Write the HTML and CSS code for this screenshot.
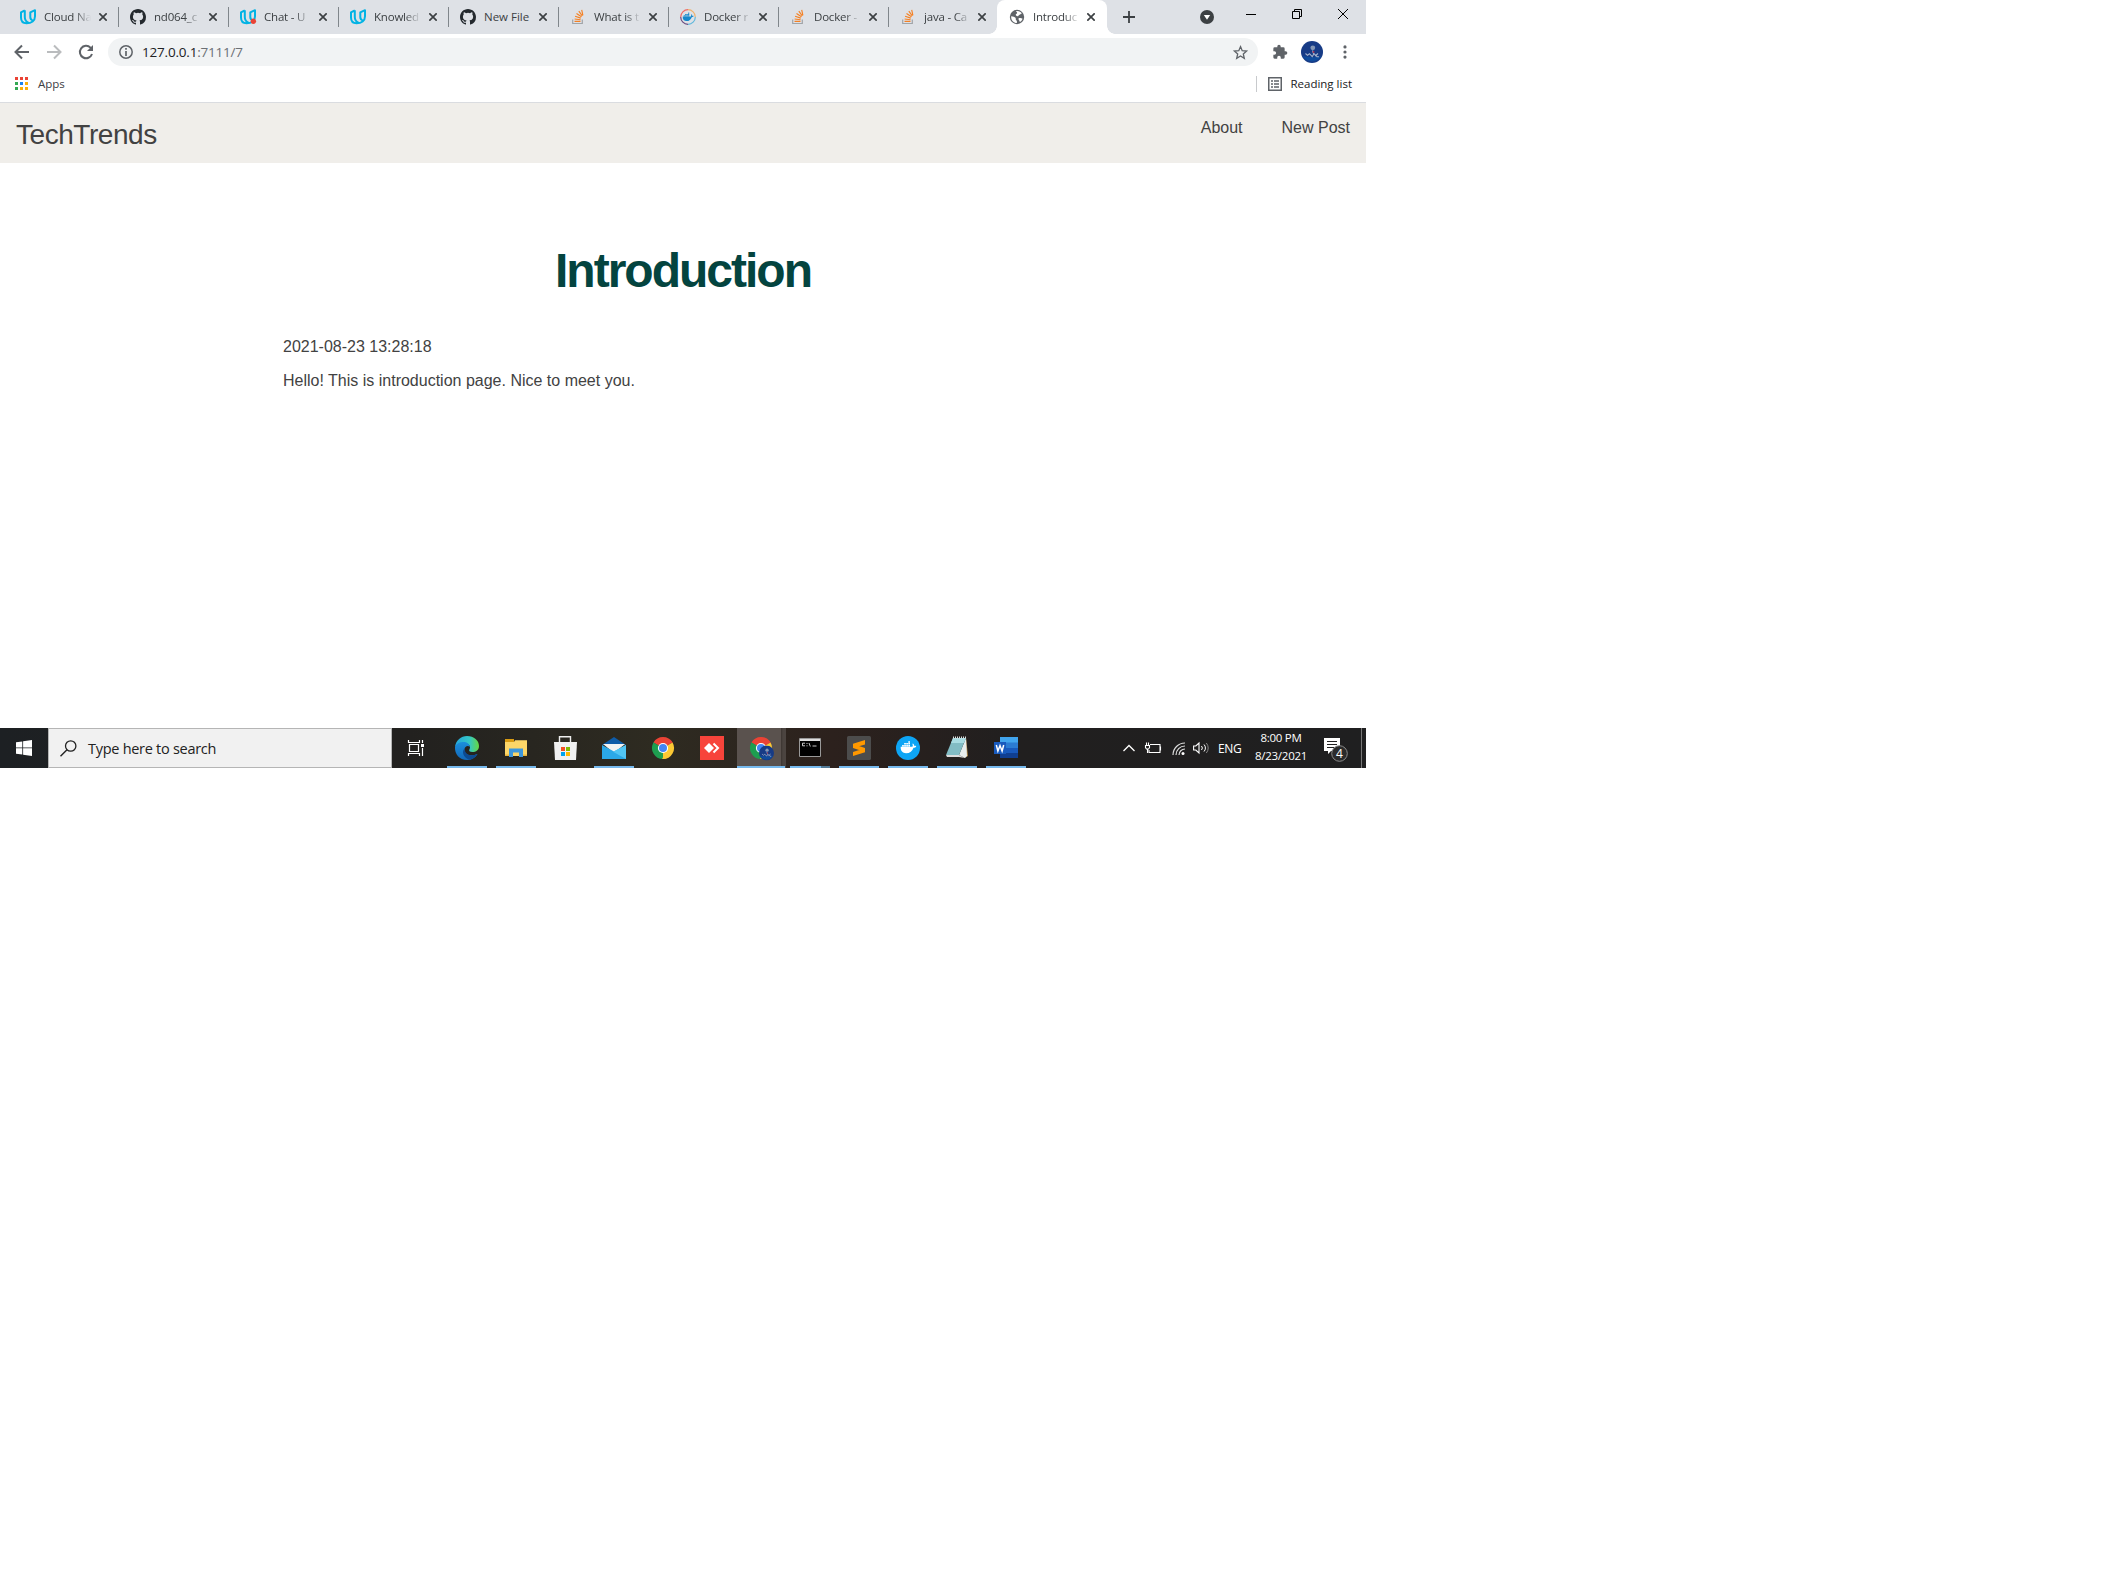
FILE: index.html
```html
<!DOCTYPE html>
<html lang="en">
<head>
<meta charset="utf-8">
<title>TechTrends</title>
<link rel="stylesheet" href="styles.css">
</head>
<body>
<svg class="defs" aria-hidden="true">
  <defs>
    <symbol id="udacity" viewBox="0 0 16 16"><g fill="none" stroke="#02b3e4" stroke-width="2" stroke-linejoin="round"><path d="M4.800 1.300 1 3.300v5.200c0 3.400 2 5.700 5.500 5.700 5 0 8.500-2.500 8.500-7V1.200L10.300 3.300V8c0 1.700.7 2.800 2.200 3.200M4.800 1.300V8c0 2.700 1 4.500 3.700 5.600"/></g></symbol>
    <symbol id="github" viewBox="0 0 16 16"><path fill="#24292e" d="M8 0C3.580 0 0 3.580 0 8c0 3.540 2.290 6.530 5.470 7.590.4.070.55-.17.55-.38 0-.19-.01-.82-.01-1.490-2.010.37-2.530-.49-2.690-.94-.09-.23-.48-.94-.82-1.130-.28-.15-.68-.52-.01-.53.63-.01 1.080.58 1.230.82.72 1.210 1.870.87 2.330.66.070-.52.28-.87.51-1.070-1.780-.2-3.640-.89-3.640-3.950 0-.87.31-1.590.82-2.150-.08-.2-.36-1.020.08-2.120 0 0 .67-.21 2.200.82a7.600 7.600 0 0 1 4 0c1.530-1.040 2.200-.82 2.200-.82.44 1.100.16 1.920.08 2.120.51.56.82 1.270.82 2.150 0 3.070-1.870 3.750-3.650 3.950.29.25.54.73.54 1.480 0 1.070-.01 1.930-.01 2.200 0 .21.15.46.55.38A8 8 0 0 0 16 8c0-4.420-3.580-8-8-8z"/></symbol>
    <symbol id="stack" viewBox="0 0 16 16"><path d="M2.700 10.500v4h9.600v-4" fill="none" stroke="#a0a4a8" stroke-width="1.200"/><path d="M4.500 12.400h6M4.600 10l6 .7M5.100 7.300l5.700 1.800M6.500 4.500l5 3.200M8.800 2.200l3.500 4.700M11.700.8l1.200 5.500" fill="none" stroke="#f48024" stroke-width="1.150"/></symbol>
    <symbol id="whale" viewBox="0 0 24 18"><path d="M1 8h16.500c.8-1.300.7-2.800-.1-4l.9-.7c1.200.9 1.700 2 1.700 3.200 1.200-.2 2.300 0 3 .6-.7 1.500-2 2.100-3.900 2.100C17.500 14 14 17 8.500 17 4 17 .5 14 1 8zM3 5.300h2.400v2.200H3zM5.900 5.300h2.400v2.200H5.900zM8.800 5.300h2.400v2.200H8.800zM11.700 5.300h2.400v2.200h-2.400zM5.900 2.700h2.400v2.200H5.900zM8.800 2.700h2.400v2.200H8.800zM11.700 2.700h2.400v2.200h-2.400zM11.700.1h2.400v2.200h-2.400z"/></symbol>
    <symbol id="close" viewBox="0 0 8 8"><path d="M.3.300l7.400 7.400M7.700.300.3 7.700" stroke="#3c4043" stroke-width="1.700" fill="none"/></symbol>
    <symbol id="chrome" viewBox="0 0 24 24"><path d="M12 12 2.470 6.500A11 11 0 0 1 21.530 6.500z" fill="#ea4335"/><path d="M12 12 21.530 6.500A11 11 0 0 1 12 23z" fill="#fcc934"/><path d="M12 12 12 23A11 11 0 0 1 2.470 6.500z" fill="#1e9e50"/><path d="M12 7h9.800L20 4.500H9z" fill="#ea4335"/><path d="M16.300 14.500 11 23l4-.5 5-8.300z" fill="#fcc934"/><path d="M7.700 14.500 2.600 6.300l-1 4.500 4 5.700z" fill="#1e9e50"/><circle cx="12" cy="12" r="5.100" fill="#fff"/><circle cx="12" cy="12" r="4" fill="#4285f4"/></symbol>
    <symbol id="avatar" viewBox="0 0 22 22"><circle cx="11" cy="11" r="11" fill="#173b86"/><path d="M1.500 15a11 11 0 0 0 19 0c-5 2-13 1-19 0z" fill="#0f4c9c"/><circle cx="11.800" cy="6.800" r="2.400" fill="#8497b5"/><path d="M4.500 12.500l2 1.800 2-1.600 2.700 3 1.800-3 3 3h2M11.500 9.500l1 3M14 15l3-2.500" fill="none" stroke="#a3b2cb" stroke-width="1.100"/><circle cx="12.500" cy="11" r="1" fill="#a02b50"/></symbol>
  </defs>
</svg>

<main class="screen">
  <nav class="tabs">
    <div class="tab"><svg class="fav"><use href="#udacity"/></svg><span class="label">Cloud Na</span><svg class="x"><use href="#close"/></svg></div>
    <div class="tab"><svg class="fav"><use href="#github"/></svg><span class="label">nd064_c</span><svg class="x"><use href="#close"/></svg></div>
    <div class="tab"><svg class="fav" viewBox="0 0 16 16"><use href="#udacity" width="16" height="16"/><circle cx="13.400" cy="12.300" r="2.700" fill="#ea4335"/></svg><span class="label">Chat - U</span><svg class="x"><use href="#close"/></svg></div>
    <div class="tab"><svg class="fav"><use href="#udacity"/></svg><span class="label">Knowled</span><svg class="x"><use href="#close"/></svg></div>
    <div class="tab"><svg class="fav"><use href="#github"/></svg><span class="label whole">New File</span><svg class="x"><use href="#close"/></svg></div>
    <div class="tab"><svg class="fav"><use href="#stack"/></svg><span class="label">What is t</span><svg class="x"><use href="#close"/></svg></div>
    <div class="tab"><svg class="fav" viewBox="0 0 16 16"><g fill="none" stroke-width="1.200"><path d="M8 .7A7.300 7.300 0 0 0 .7 8" stroke="#ee6a66"/><path d="M8 .7A7.300 7.300 0 0 1 15.300 8" stroke="#efb36f"/><path d="M15.300 8A7.300 7.300 0 0 1 8 15.300" stroke="#61b8dc"/><path d="M.7 8A7.300 7.300 0 0 0 8 15.300" stroke="#6b4c80"/></g><use href="#whale" x="2.200" y="3.300" width="12" height="9.500" fill="#1688cb"/></svg><span class="label">Docker r</span><svg class="x"><use href="#close"/></svg></div>
    <div class="tab"><svg class="fav"><use href="#stack"/></svg><span class="label">Docker -</span><svg class="x"><use href="#close"/></svg></div>
    <div class="tab last"><svg class="fav"><use href="#stack"/></svg><span class="label">java - Ca</span><svg class="x"><use href="#close"/></svg></div>
    <div class="tab active"><svg class="fav" viewBox="0 0 16 16"><circle cx="8" cy="8" r="7.200" fill="#5f6368"/><path d="M2.200 7.200c2 .2 3.500.6 4.300 1.600.6.900-.2 1.800.8 2.500.8.600.8 1.600.5 2.700C4.500 14 1.800 11 2.200 7.200zM7 2.100c2.700-.5 4.800.7 5.900 2.400-1.300.1-1.300 1-2.300 1.300-1.500.3-.5 1.600-1.900 1.500-1.200-.2-2.300-.8-1.900-1.900.3-.8 1.500-.7 1.300-1.700C8 3.100 7.200 2.900 7 2.100zM9.500 9.400c1.200-.7 2.900-.5 4.100.3-.5 1.600-1.500 2.700-2.800 3.400-.2-1.400-1.700-2.300-1.300-3.700z" fill="#fff"/></svg><span class="label">Introduc</span><svg class="x"><use href="#close"/></svg></div>
    <svg class="plus" viewBox="0 0 12 12"><path d="M6 0v12M0 6h12" stroke="#3c4043" stroke-width="1.800"/></svg>
    <div class="window">
      <svg width="14" height="14" viewBox="0 0 14 14"><circle cx="7" cy="7" r="7" fill="#3c4043"/><path d="M3.800 5h6.400L7 9.700z" fill="#fff"/></svg>
      <svg width="10" height="10" viewBox="0 0 10 10"><path d="M0 5.500h10" stroke="#000"/></svg>
      <svg width="10" height="10" viewBox="0 0 10 10"><path d="M.5 2.500h7v7h-7zM2.500 2.500v-2h7v7h-2" fill="none" stroke="#000"/></svg>
      <svg width="10" height="10" viewBox="0 0 10 10"><path d="M0 0l10 10M10 0 0 10" stroke="#000"/></svg>
    </div>
  </nav>

  <div class="toolbar">
    <svg class="nav-icon" viewBox="0 0 16 16"><path d="M15 8H2M8 1.500 1.500 8 8 14.500" fill="none" stroke="#5f6368" stroke-width="2"/></svg>
    <svg class="nav-icon" viewBox="0 0 16 16"><path d="M1 8h13M8 1.500 14.500 8 8 14.500" fill="none" stroke="#babcbe" stroke-width="2"/></svg>
    <svg class="nav-icon" viewBox="0 0 16 16"><path d="M14 10A6.200 6.200 0 1 1 12.500 3.600L14 5" fill="none" stroke="#5f6368" stroke-width="2"/><path d="M15 1v6H9z" fill="#5f6368"/></svg>
    <div class="address">
      <svg width="14" height="14" viewBox="0 0 14 14"><circle cx="7" cy="7" r="6.200" fill="none" stroke="#5f6368" stroke-width="1.500"/><path d="M7 3v1.800M7 6v5" stroke="#5f6368" stroke-width="1.700"/></svg>
      <span class="url">127.0.0.1<span class="path">:7111/7</span></span>
      <svg class="star" width="15" height="15" viewBox="0 0 15 15"><path d="M7.500 1.600 9.200 5.700l4.400.4-3.300 2.900 1 4.300-3.800-2.300-3.800 2.300 1-4.300L1.400 6.100l4.400-.4z" fill="none" stroke="#5f6368" stroke-width="1.300"/></svg>
    </div>
    <svg class="puzzle" viewBox="0 0 24 24"><path d="M20.500 11H19V7a2 2 0 0 0-2-2h-4V3.500a2.500 2.500 0 0 0-5 0V5H4a2 2 0 0 0-2 2v3.800h1.500a2.700 2.700 0 0 1 0 5.400H2V20a2 2 0 0 0 2 2h3.800v-1.500a2.700 2.700 0 0 1 5.400 0V22H17a2 2 0 0 0 2-2v-4h1.500a2.500 2.500 0 0 0 0-5z" fill="#5f6368"/></svg>
    <svg class="avatar"><use href="#avatar"/></svg>
    <svg class="dots" viewBox="0 0 4 14"><g fill="#5f6368"><circle cx="2" cy="1.900" r="1.600"/><circle cx="2" cy="7" r="1.600"/><circle cx="2" cy="12.100" r="1.600"/></g></svg>
  </div>

  <div class="bookmarks">
    <svg width="13" height="13" viewBox="0 0 13 13"><path d="M0 0h3v3H0zM5 0h3v3H5zM10 0h3v3h-3z" fill="#ea4335"/><path d="M0 5h3v3H0zM0 10h3v3H0z" fill="#34a853"/><path d="M5 5h3v3H5z" fill="#1a83f0"/><path d="M10 5h3v3h-3zM5 10h3v3H5zM10 10h3v3h-3z" fill="#fbaf08"/></svg>
    <span class="apps">Apps</span>
    <div class="reading">
      <svg width="14" height="14" viewBox="0 0 14 14"><path d="M.75.75h12.500v12.500H.75z" fill="none" stroke="#5f6368" stroke-width="1.500"/><path d="M3 4h2M6 4h5M3 7h2M6 7h5M3 10h2M6 10h5" stroke="#5f6368" stroke-width="1.500"/></svg>
      <span>Reading list</span>
    </div>
  </div>

  <div class="site">
    <header class="site-head">
      <span class="brand">TechTrends</span>
      <span class="links"><span>About</span><span>New Post</span></span>
    </header>
    <article class="post">
      <h1>Introduction</h1>
      <p>2021-08-23 13:28:18</p>
      <p>Hello! This is introduction page. Nice to meet you.</p>
    </article>
  </div>

  <footer class="taskbar">
    <div class="start"><svg width="16" height="16" viewBox="0 0 16 16"><path d="M0 2.300 6.300 1.400v6.100H0zM7.100 1.200 16 0v7.500H7.100zM0 8.300h6.300v6.200L0 13.700zM7.100 8.300H16V16l-8.900-1.300z" fill="#fff"/></svg></div>
    <div class="search"><svg width="17" height="17" viewBox="0 0 17 17"><circle cx="10.700" cy="6" r="5.200" fill="none" stroke="#222" stroke-width="1.300"/><path d="M7 9.800.5 16.300" stroke="#222" stroke-width="1.400"/></svg><span>Type here to search</span></div>
    <div class="taskview"><svg width="17" height="16" viewBox="0 0 17 16"><path d="M1.500 4.500h9v7h-9zM.5 0v2.500h11V0M.5 16v-2.500h11V16M14.500 0v3M14.500 8v8" fill="none" stroke="#fff" stroke-width="1.200"/><path d="M13 4h3v3h-3z" fill="#fff"/></svg></div>
    <div class="icons">
      <div class="app open"><svg viewBox="0 0 24 24"><defs><linearGradient id="eg" x1="0" x2="1"><stop offset="0" stop-color="#24a6dc"/><stop offset=".6" stop-color="#34c7c7"/><stop offset="1" stop-color="#66d83f"/></linearGradient><linearGradient id="eb" y1="0" y2="1" x2="0"><stop offset="0" stop-color="#1b8fdd"/><stop offset="1" stop-color="#1267b8"/></linearGradient></defs><path d="M0 11C1 4 6 0 12 0c7 0 12 4.500 12 10 0 4-3 6-6.500 6-3 0-4-1.300-3-2.700 1.700-2.500-.5-6-5-6C5.500 7.300 2 8.500 0 11z" fill="url(#eg)"/><path d="M0 11c1.500-4 5.500-5 8.500-5 3.500 0 6 2 6.300 5-1.500-2-5.300-1-5.300 2.500 0 5 5.500 7.500 13 4.500C20 22 16.500 24 12 24 4.500 24-.5 18 0 11z" fill="url(#eb)"/><path d="M9.600 12.500C6.500 15 8 22 14.500 23.700c3.500-.7 6.300-2.700 8-5.700-7 3-13 .5-12.900-5.500z" fill="#0c4a91"/></svg></div>
      <div class="app open"><svg viewBox="0 0 24 24"><path d="M1 3h9v5H1z" fill="#d99b12"/><path d="M1 6h9l1-1.700h12V20H1z" fill="#fcd668"/><path d="M5 12.500h14V21h-4v-4.500H9V21H5z" fill="#3d97dc"/><path d="M1 18.500h4V20H1zM19 18.500h4V20h-4z" fill="#e8b43a"/></svg></div>
      <div class="app"><svg viewBox="0 0 24 24"><path d="M6.500 7V.8h11V7" fill="none" stroke="#eee" stroke-width="1.400"/><path d="M1 6h23l-1 18H2z" fill="#f1f1f1"/><path d="M8 11h4v4H8z" fill="#f25022"/><path d="M13 11h4v4h-4z" fill="#7fba00"/><path d="M8 16h4v4H8z" fill="#00a4ef"/><path d="M13 16h4v4h-4z" fill="#ffb900"/></svg></div>
      <div class="app open"><svg viewBox="0 0 24 24"><path d="M0 9 12 1l12 8z" fill="#0f5ca8"/><path d="M1 8h22L12 17z" fill="#f3f3f3"/><path d="M0 9l12 6.500L24 9v14H0z" fill="#2ba8e8"/><path d="M24 9v14L11 15.800z" fill="#51c5f4"/></svg></div>
      <div class="app"><svg viewBox="0 0 24 24"><use href="#chrome" width="24" height="24"/></svg></div>
      <div class="app"><svg viewBox="0 0 24 24"><path d="M0 0h24v24H0z" fill="#f7443b"/><path d="M9 7l5 5-5 5-5-5z" fill="#fff"/><path d="M13.500 7.500 18 12l-4.500 4.500" fill="none" stroke="#fff" stroke-width="2"/></svg></div>
      <div class="app current"><svg viewBox="0 0 24 24"><use href="#chrome" width="24" height="24"/><use href="#avatar" x="10" y="9.500" width="15" height="15"/></svg></div>
      <div class="app open shaded"><svg viewBox="0 0 24 24"><path d="M1.500 2.500h21v18h-21z" fill="#000" stroke="#999"/><path d="M2 3h20v2H2z" fill="#ddd"/><path d="M7 7.200H4.500v2.600H7M9 7v1M9 9.300v1M11 7l1.300 3.500M14.500 10h4" stroke="#ddd" stroke-width=".9" fill="none"/></svg></div>
      <div class="app open"><svg viewBox="0 0 24 24"><rect width="24" height="24" rx="1.500" fill="#4c4c4c"/><path d="M18 4v4.500L6 12V7.700zM6 8l12 4v4L6 12zM18 12v4.300L6 20v-4z" fill="#ff9800"/></svg></div>
      <div class="app open"><svg viewBox="0 0 24 24"><circle cx="12" cy="12" r="12" fill="#0da5f5"/><use href="#whale" x="4" y="5" width="17" height="13" fill="#fff"/></svg></div>
      <div class="app open"><svg viewBox="0 0 24 24"><path d="M21 2l2 18-4 2z" fill="#b58a48"/><path d="M21 2l-7 17 6 3 2-2z" fill="#e9eeee"/><path d="M8 2h13l-7 17H1z" fill="#82bcc4"/><path d="M8 2h13l-2 5H6z" fill="#a9dce2"/><path d="M1 19h13l6 3-6-1H2z" fill="#ddd"/><path d="M8 1.500h13" stroke="#ddd" stroke-dasharray="1 1" stroke-width="2"/></svg></div>
      <div class="app open"><svg viewBox="0 0 24 24"><path d="M6 1h18v6H6z" fill="#41a5ee"/><path d="M6 6.500h18V12H6z" fill="#2b7cd3"/><path d="M6 12h18v5.500H6z" fill="#185abd"/><path d="M6 17h18v5H6z" fill="#103f91"/><path d="M0 6h12v12H0z" fill="#185abd"/><path d="M2.300 9l1.600 6L6 9.500 8.100 15l1.600-6" fill="none" stroke="#fff" stroke-width="1.500"/></svg></div>
    </div>
    <div class="tray">
      <svg width="12" height="8" viewBox="0 0 12 8"><path d="M.5 7 6 1.500 11.500 7" fill="none" stroke="#fff" stroke-width="1.300"/></svg>
      <svg width="17" height="12" viewBox="0 0 17 12"><path d="M5 2.500h10v8H4V8M15.500 4.500v4M.5 3.500h4v2l-1 1.500h-2l-1-1.500zM1.500 3V.5M3.500 3V.5M2.500 7v4" fill="none" stroke="#fff" stroke-width="1.100"/></svg>
      <svg class="wifi" width="14" height="13" viewBox="0 0 14 13"><g fill="none" stroke="#ddd" stroke-width="1.200"><path d="M1 13A12 12 0 0 1 13 1M4 13a9 9 0 0 1 9-9M7 13a6 6 0 0 1 6-6"/></g><circle cx="11" cy="11.500" r="1.500" fill="#fff"/></svg>
      <svg width="17" height="12" viewBox="0 0 17 12"><path d="M.6 4h2.200L6 1v10L2.800 8H.6z" fill="none" stroke="#fff" stroke-width="1.100"/><path d="M8.500 4a3 3 0 0 1 0 4M11 2.500a5 5 0 0 1 0 7" fill="none" stroke="#fff"/><path d="M13.300 1a7.500 7.500 0 0 1 0 10" fill="none" stroke="#888"/></svg>
      <span class="lang">ENG</span>
      <span class="clock"><span>8:00 PM</span><span>8/23/2021</span></span>
      <svg class="note" viewBox="0 0 24 24"><path d="M0 0h16v13H7l-3 3v-3H0z" fill="#fff"/><path d="M3 3.500h10M3 6.500h10M3 9.500h7" stroke="#222"/><circle cx="15.500" cy="15.500" r="7.800" fill="#2b2b2b" stroke="#8a8a8a"/><text x="15.500" y="19.700" class="count">4</text></svg>
    </div>
    <div class="peek"></div>
  </footer>
</main>
</body>
</html>
```
FILE: styles.css
```css
* { box-sizing: border-box; }
body { margin: 0; background: #fff; font-family: "Open Sans", sans-serif; }
svg { display: block; flex: none; overflow: visible; }
.defs { position: absolute; width: 0; height: 0; }
.screen { width: 1366px; height: 768px; display: flex; flex-direction: column; overflow: hidden; }

.tabs { height: 34px; flex: none; display: flex; align-items: center; background: #dee1e6; padding-left: 9px; }
.tab { width: 110px; height: 34px; flex: none; display: flex; align-items: center; padding-left: 11px; position: relative; }
.tab::after { content: ""; position: absolute; right: 0; top: 7px; width: 1px; height: 20px; background: #80868b; }
.tab.last::after, .tab.active::after { display: none; }
.fav { width: 16px; height: 16px; margin-right: 8px; }
.label { width: 47px; padding-bottom: 2px; white-space: nowrap; font-size: 11.500px; letter-spacing: -0.200px; color: #3c4043; mask-image: linear-gradient(to right, #000 65%, transparent 100%); }
.label.whole { mask-image: none; letter-spacing: 0; }
.x { width: 8px; height: 8px; margin-left: 8px; }
.tab.active { background: #fff; border-radius: 8px 8px 0 0; margin-left: -2px; padding-left: 12px; }
.tab.last .x, .tab.active .x { margin-left: 7px; }
.tab.active::before { content: ""; position: absolute; left: -8px; right: -8px; bottom: 0; height: 8px; background: radial-gradient(circle at 0 0, transparent 7.500px, #fff 8px) left / 8px 8px no-repeat, radial-gradient(circle at 100% 0, transparent 7.500px, #fff 8px) right / 8px 8px no-repeat; }
.plus { width: 12px; height: 12px; margin-left: 16px; }
.window { display: flex; align-items: center; margin-left: auto; padding-right: 18px; gap: 36px; }
.window svg { margin-bottom: 6px; }
.window svg:first-child { margin: 0 -4px 0 0; }

.toolbar { height: 36px; flex: none; display: flex; align-items: center; padding: 0 19px 0 14px; }
.nav-icon { width: 16px; height: 16px; margin-right: 16px; }
.address { width: 1150px; height: 28px; margin-left: -2px; border-radius: 14px; background: #f1f3f4; display: flex; align-items: center; padding: 0 10px 0 11px; }
.url { margin-left: 9px; font-size: 13.500px; letter-spacing: -0.200px; color: #202124; }
.path { color: #6b7075; }
.star { margin-left: auto; }
.puzzle { width: 16px; height: 16px; margin-left: 14px; }
.avatar { width: 22px; height: 22px; margin-left: 13px; }
.dots { width: 4px; height: 14px; margin-left: 20px; }

.bookmarks { height: 33px; flex: none; display: flex; align-items: center; padding: 0 14px 5px 15px; border-bottom: 1px solid #dadce0; font-size: 11.500px; color: #3c4043; }
.apps { margin-left: 10px; }
.reading { margin-left: auto; height: 16px; display: flex; align-items: center; gap: 8px; padding-left: 11px; border-left: 1px solid #c8cacd; color: #202124; white-space: nowrap; }

.site { flex: 1; font-family: "Liberation Sans", Arial, sans-serif; color: #424242; }
.site-head { height: 60px; background: #f0eeea; display: flex; justify-content: space-between; padding: 16px 16px 0; }
.brand { font-size: 28px; line-height: 32px; letter-spacing: -0.450px; }
.links { display: flex; gap: 39px; font-size: 16px; line-height: 18px; }
.post { width: 800px; margin: 0 auto; padding-top: 76px; }
.post h1 { margin: 0 0 32px; text-align: center; font-size: 48px; line-height: 64px; letter-spacing: -2px; color: #04443f; }
.post p { margin: 0 0 10px; font-size: 16px; line-height: 24px; }

.taskbar { height: 40px; flex: none; display: flex; background: linear-gradient(to right, #1d2023 0, #22211f 30%, #2e2b21 48%, #2c211d 61%, #211f1f 74%, #1f1f20 100%); color: #fff; }
.start, .taskview { width: 48px; display: flex; align-items: center; justify-content: center; }
.search { width: 344px; background: #f1f1f1; border: 1px solid #b5b5b5; display: flex; align-items: center; padding-left: 11px; font-size: 14.500px; letter-spacing: -0.280px; color: #222; }
.search span { margin-left: 11px; }
.icons { display: flex; margin-left: 3px; }
.app { width: 49px; display: flex; align-items: center; justify-content: center; padding-right: 1px; position: relative; }
.app svg { width: 24px; height: 24px; }
.open::after, .current::after { content: ""; position: absolute; bottom: 0; left: 4px; width: 40px; height: 2px; background: #76b9ed; }
.current { background: linear-gradient(to right, #5a524e 44px, #3b3430 44px, #4b4440 46px); }
.current::after { left: 0; width: 48px; }
.shaded::after { background: linear-gradient(to right, #76b9ed 31px, #527995 31px); }
.tray { flex: 1; display: flex; align-items: center; padding-left: 92px; }
.tray svg { margin-right: 10px; }
.tray .wifi { margin-right: 7px; }
.tray .wifi + svg { margin-right: 8px; }
.lang { width: 26px; font-size: 12px; letter-spacing: -0.400px; }
.clock { width: 78px; margin-left: -2px; display: flex; flex-direction: column; align-items: center; font-size: 11.500px; line-height: 18px; letter-spacing: -0.250px; padding-bottom: 2px; }
.tray .note { width: 24px; height: 24px; margin: 4px 0 0 4px; }
.count { font-size: 12px; fill: #fff; text-anchor: middle; }
.peek { width: 5px; border-left: 1px solid #777; }
```
